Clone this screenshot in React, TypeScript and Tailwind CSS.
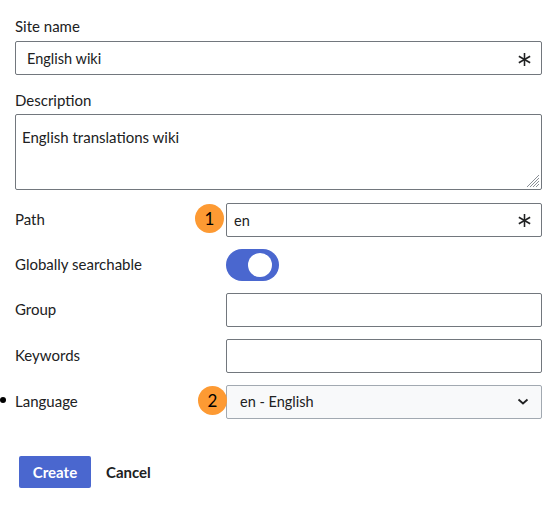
import { useState } from "react";

const Asterisk = () => (
    <svg width="13" height="13" viewBox="0 0 20 20" className="text-[#202122]">
        <g stroke="currentColor" strokeWidth="2.4" strokeLinecap="butt">
            <line x1="10" y1="0" x2="10" y2="20" />
            <line x1="1.3" y1="5" x2="18.7" y2="15" />
            <line x1="1.3" y1="15" x2="18.7" y2="5" />
        </g>
    </svg>
);

const Badge = ({ n, className }: { n: number; className: string }) => (
    <span
        className={
            "absolute flex h-[29px] w-[29px] items-center justify-center rounded-full bg-[#fd9a33] text-[17px] leading-none text-black " +
            className
        }
    >
        {n}
    </span>
);

const Row = ({ label, children }: { label: string; children: React.ReactNode }) => (
    <div className="flex items-center">
        <label className="-mt-[3px] w-[211px] shrink-0 text-[15px] leading-5 text-[#202122]">{label}</label>
        <div className="relative flex-1">{children}</div>
    </div>
);

const App = () => {
    const [siteName, setSiteName] = useState("English wiki");
    const [description, setDescription] = useState("English translations wiki");
    const [path, setPath] = useState("en");
    const [searchable, setSearchable] = useState(true);
    const [group, setGroup] = useState("");
    const [keywords, setKeywords] = useState("");

    return (
        <div className="min-h-screen bg-white pl-[15px] pr-[17px] pt-[16px] font-['Lato',sans-serif] text-[#202122]">
            {/* Site name */}
            <label className="block text-[15px] leading-5">Site name</label>
            <div className="relative mt-[5px]">
                <input
                    className="h-[34px] w-full rounded-[2px] border border-[#72777d] pl-[11px] pr-9 text-[14.5px] outline-none"
                    value={siteName}
                    onChange={(e) => setSiteName(e.target.value)}
                />
                <span className="pointer-events-none absolute right-[11px] top-[12px]">
                    <Asterisk />
                </span>
            </div>

            {/* Description */}
            <label className="mt-[15px] block text-[15px] leading-5">Description</label>
            <div className="relative mt-[4px]">
                <textarea
                    className="block h-[76px] w-full resize-none rounded-[2px] border border-[#72777d] px-[6px] pt-[12px] text-[15px] leading-5 outline-none"
                    value={description}
                    onChange={(e) => setDescription(e.target.value)}
                />
                <svg
                    width="14"
                    height="14"
                    viewBox="0 0 14 14"
                    className="pointer-events-none absolute bottom-[2px] right-[2px]"
                >
                    <g stroke="#8a8f96" strokeWidth="1">
                        <line x1="1" y1="13" x2="13" y2="1" />
                        <line x1="4" y1="13" x2="13" y2="4" />
                        <line x1="7" y1="13" x2="13" y2="7" />
                        <line x1="10" y1="13" x2="13" y2="10" />
                    </g>
                </svg>
            </div>

            <div className="mt-[13px] flex flex-col gap-3">
                <Row label="Path">
                    <Badge n={1} className="-left-[31px] top-[1px]" />
                    <input
                        className="h-[34px] w-full rounded-[2px] border border-[#72777d] pl-[7px] pr-9 text-[14.5px] outline-none"
                        value={path}
                        onChange={(e) => setPath(e.target.value)}
                    />
                    <span className="pointer-events-none absolute right-[11px] top-[11px]">
                        <Asterisk />
                    </span>
                </Row>

                <Row label="Globally searchable">
                    <button
                        type="button"
                        onClick={() => setSearchable(!searchable)}
                        className={
                            "flex h-[32px] w-[53px] items-center rounded-full px-[4px] " +
                            (searchable ? "justify-end bg-[#4a67cf] pr-[7px]" : "justify-start bg-[#c8ccd1]")
                        }
                    >
                        <span className="block h-[24px] w-[24px] rounded-full bg-white" />
                    </button>
                </Row>

                <Row label="Group">
                    <input
                        className="h-[34px] w-full rounded-[2px] border border-[#72777d] px-[7px] text-[14.5px] outline-none"
                        value={group}
                        onChange={(e) => setGroup(e.target.value)}
                    />
                </Row>

                <Row label="Keywords">
                    <input
                        className="h-[34px] w-full rounded-[2px] border border-[#72777d] px-[7px] text-[14.5px] outline-none"
                        value={keywords}
                        onChange={(e) => setKeywords(e.target.value)}
                    />
                </Row>

                <div className="relative">
                    <span className="absolute -left-[15px] top-[12px] h-[6px] w-[6px] rounded-full bg-black" />
                    <Row label="Language">
                        <Badge n={2} className="-left-[28px] top-[1px]" />
                        <div className="flex h-[34px] w-full items-center justify-between rounded-[2px] border border-[#a2a9b1] bg-[#f8f9fa] pl-[13px] pr-[12px] text-[14.5px]">
                            <span>en - English</span>
                            <svg width="12" height="8" viewBox="0 0 12 8">
                                <path d="M1.5 1.5 L6 5.5 L10.5 1.5" fill="none" stroke="#202122" strokeWidth="1.8" />
                            </svg>
                        </div>
                    </Row>
                </div>
            </div>

            {/* Actions */}
            <div className="mt-[37px] flex items-center pl-[4px]">
                <button
                    type="button"
                    className="h-[32px] w-[72px] rounded-[2px] bg-[#4a67cf] text-[15px] font-bold text-white"
                >
                    Create
                </button>
                <button type="button" className="ml-[15px] text-[15px] font-bold text-[#202122]">
                    Cancel
                </button>
            </div>
        </div>
    );
};

export default App;
